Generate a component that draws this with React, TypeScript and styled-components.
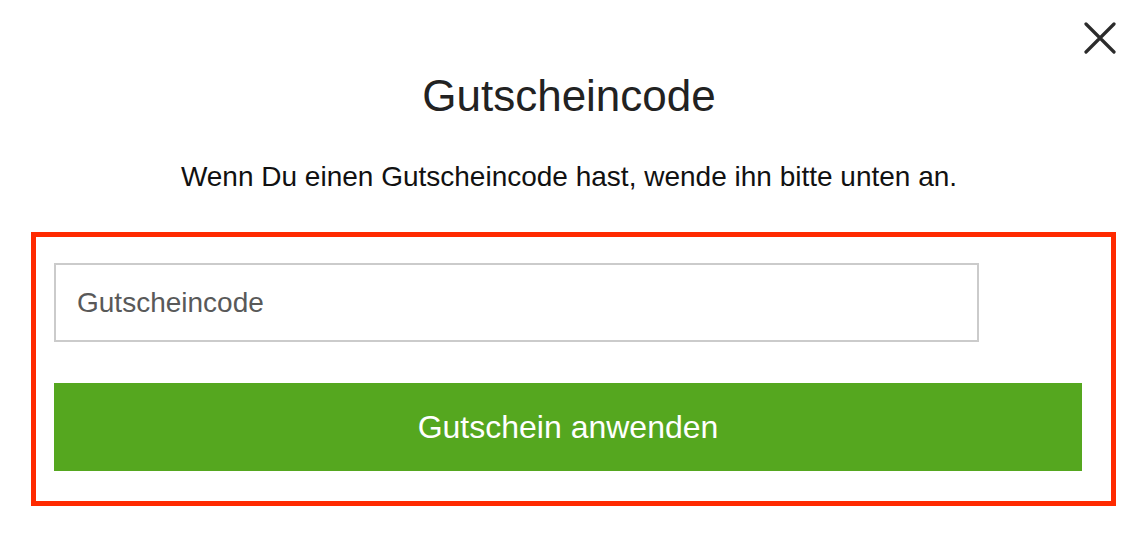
import React from 'react'
import styled, { createGlobalStyle } from 'styled-components'

const GlobalStyle = createGlobalStyle`
  html, body {
    margin: 0;
    padding: 0;
    background: #ffffff;
  }
  body {
    font-family: 'Liberation Sans', Arial, Helvetica, sans-serif;
  }
`

const Modal = styled.div`
  position: relative;
  box-sizing: border-box;
  width: 1138px;
  height: 548px;
  padding-top: 70px;
  display: flex;
  flex-direction: column;
  align-items: center;
`

const CloseButton = styled.button`
  position: absolute;
  top: 21px;
  right: 21px;
  width: 34px;
  height: 34px;
  padding: 0;
  border: none;
  background: transparent;
  cursor: pointer;
  display: flex;
  align-items: center;
  justify-content: center;
`

const Title = styled.h2`
  margin: 0;
  font-size: 44px;
  line-height: 52px;
  font-weight: 400;
  color: #222222;
`

const Subtitle = styled.p`
  margin: 38px 0 0;
  font-size: 28px;
  line-height: 34px;
  color: #111111;
`

const Form = styled.form`
  box-sizing: border-box;
  align-self: flex-start;
  margin: 38px 0 0 31px;
  width: 1085px;
  height: 274px;
  border: 5px solid #ff2a00;
  padding: 26px 29px 0 18px;
  display: flex;
  flex-direction: column;
  gap: 41px;
`

const Input = styled.input`
  box-sizing: border-box;
  width: 925px;
  height: 79px;
  border: 2px solid #cbcbcb;
  padding: 0 21px;
  font-family: inherit;
  font-size: 28px;
  color: #333;
  outline: none;

  &::placeholder {
    color: #595959;
  }
`

const SubmitButton = styled.button`
  box-sizing: border-box;
  width: 1028px;
  height: 88px;
  border: none;
  background: #55a71f;
  color: #ffffff;
  font-family: inherit;
  font-size: 32px;
  cursor: pointer;
`

export default function App() {
  return (
    <>
      <GlobalStyle />
      <Modal>
        <CloseButton aria-label="Schließen">
          <svg width="32" height="32" viewBox="0 0 32 32">
            <path
              d="M2 2 L30 30 M30 2 L2 30"
              stroke="#2b2b2b"
              strokeWidth="3.2"
              strokeLinecap="round"
              fill="none"
            />
          </svg>
        </CloseButton>
        <Title>Gutscheincode</Title>
        <Subtitle>Wenn Du einen Gutscheincode hast, wende ihn bitte unten an.</Subtitle>
        <Form onSubmit={e => e.preventDefault()}>
          <Input placeholder="Gutscheincode" />
          <SubmitButton type="submit">Gutschein anwenden</SubmitButton>
        </Form>
      </Modal>
    </>
  )
}
